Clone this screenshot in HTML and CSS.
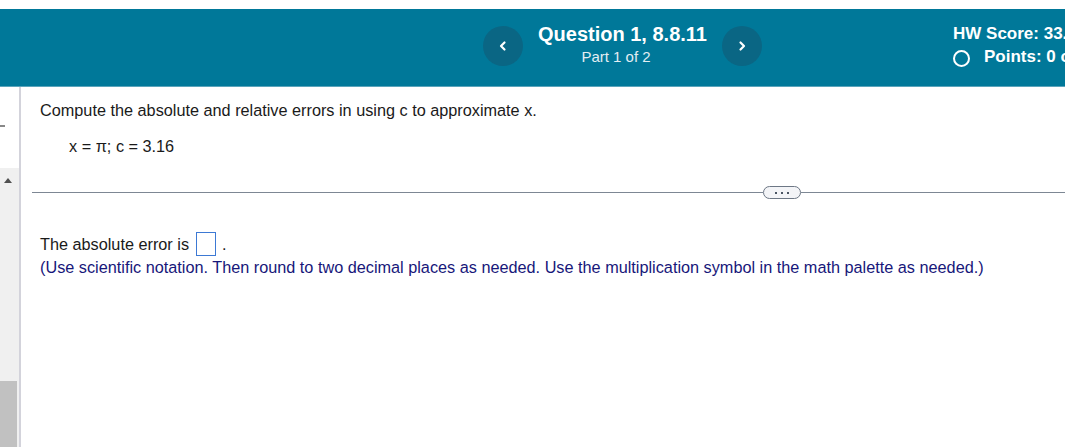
FILE: index.html
```html
<!DOCTYPE html>
<html>
<head>
<meta charset="utf-8">
<link rel="stylesheet" href="styles.css">
</head>
<body>
<div class="topstrip"></div>
<header class="header">
  <div class="nav">
    <button class="navbtn" aria-label="previous">
      <svg width="12" height="12" viewBox="0 0 12 12"><path d="M7.5 2.5 L4 6 L7.5 9.5" fill="none" stroke="#fff" stroke-width="2.2" stroke-linecap="round" stroke-linejoin="round"/></svg>
    </button>
    <div class="qtitle">
      <div class="qname">Question 1, 8.8.11</div>
      <div class="qpart">Part 1 of 2</div>
    </div>
    <button class="navbtn" aria-label="next">
      <svg width="12" height="12" viewBox="0 0 12 12"><path d="M4.5 2.5 L8 6 L4.5 9.5" fill="none" stroke="#fff" stroke-width="2.2" stroke-linecap="round" stroke-linejoin="round"/></svg>
    </button>
  </div>
  <div class="score">
    <div class="hw">HW Score: 33.33%, 1 of 3 points</div>
    <div class="points"><span class="ring"></span>Points: 0 of 1</div>
  </div>
</header>
<div class="main">
  <aside class="side">
    <div class="side-top"><span class="dash"></span></div>
    <div class="side-rest">
      <span class="tri"></span>
      <div class="thumb"></div>
    </div>
  </aside>
  <section class="content">
    <p class="q">Compute the absolute and relative errors in using c to approximate x.</p>
    <p class="given">x = π; c = 3.16</p>
    <div class="divider"><span class="line"></span><span class="pill"><i></i><i></i><i></i></span><span class="line"></span></div>
    <p class="answer">The absolute error is <span class="box"></span> .</p>
    <p class="hint">(Use scientific notation. Then round to two decimal places as needed. Use the multiplication symbol in the math palette as needed.)</p>
  </section>
</div>
</body>
</html>
```
FILE: styles.css
```css
html, body {
  margin: 0;
  padding: 0;
  background: #fff;
  font-family: "Liberation Sans", Arial, sans-serif;
  overflow: hidden;
  height: 447px;
}
.topstrip {
  height: 9px;
  background: #fff;
}
.header {
  height: 77px;
  background: #007899;
  border-bottom: 1px solid #5aa4bb;
  display: flex;
  align-items: flex-start;
  color: #fff;
  white-space: nowrap;
  overflow: hidden;
}
.nav {
  display: flex;
  align-items: flex-start;
  margin-left: 483px;
}
.navbtn {
  width: 40px;
  height: 40px;
  margin-top: 17px;
  border-radius: 50%;
  background: #0a6684;
  border: none;
  padding: 0;
  display: flex;
  align-items: center;
  justify-content: center;
  flex: none;
}
.qtitle {
  width: 168px;
  text-align: center;
  margin: 13px 16px 0 15px;
}
.qname {
  font-size: 20px;
  font-weight: bold;
  line-height: 24px;
  text-align: left;
}
.qpart {
  font-size: 15px;
  line-height: 20px;
  margin-top: 1px;
  padding-right: 12px;
  color: #e3eef3;
}
.score {
  margin-left: 191px;
  margin-top: 15px;
}
.hw {
  font-size: 17px;
  font-weight: bold;
  line-height: 20px;
}
.points {
  font-size: 17px;
  font-weight: bold;
  line-height: 22px;
  margin-top: 2px;
  display: flex;
  align-items: center;
}
.ring {
  width: 13px;
  height: 13px;
  border: 2px solid #fff;
  border-radius: 50%;
  margin: 2px 14px 0 0;
  flex: none;
}
.main {
  display: flex;
  height: 360px;
}
.side {
  width: 19px;
  flex: none;
  border-right: 2px solid #d3d3db;
  display: flex;
  flex-direction: column;
}
.side-top {
  height: 81px;
  position: relative;
}
.dash {
  position: absolute;
  left: 0;
  top: 38px;
  width: 5px;
  height: 2px;
  background: #888;
}
.side-rest {
  flex: 1;
  background: #f0f0f0;
  display: flex;
  flex-direction: column;
}
.tri {
  width: 0;
  height: 0;
  border-left: 4px solid transparent;
  border-right: 4px solid transparent;
  border-bottom: 5px solid #505050;
  margin: 10px 0 0 4px;
}
.thumb {
  margin-top: auto;
  height: 66px;
  width: 17px;
  background: #c1c1c1;
}
.content {
  flex: 1;
  padding-left: 19px;
  color: #1a1a1a;
  font-size: 16.25px;
}
.q {
  margin: 13px 0 0 0;
  line-height: 20px;
}
.given {
  margin: 16px 0 0 29px;
  line-height: 20px;
}
.divider {
  display: flex;
  align-items: center;
  margin: 30px 0 0 -8px;
}
.line {
  flex: 1;
  height: 1px;
  background: #7d8794;
}
.line:first-child {
  flex: 0 0 731px;
}
.pill {
  width: 36px;
  height: 11px;
  border: 1px solid #6d7785;
  border-radius: 7px;
  background: #f3f4f7;
  display: flex;
  align-items: center;
  justify-content: center;
  gap: 4px;
  flex: none;
}
.pill i {
  width: 2px;
  height: 2px;
  background: #4a5563;
}
.answer {
  margin: 33px 0 0 0;
  line-height: 24px;
  display: flex;
  align-items: center;
  white-space: pre;
}
.box {
  display: inline-block;
  width: 18px;
  height: 22px;
  border: 1px solid #3d79d4;
  margin: 0 2px 0 2px;
}
.hint {
  margin: 0;
  line-height: 22px;
  color: #17177a;
  white-space: nowrap;
}
```
